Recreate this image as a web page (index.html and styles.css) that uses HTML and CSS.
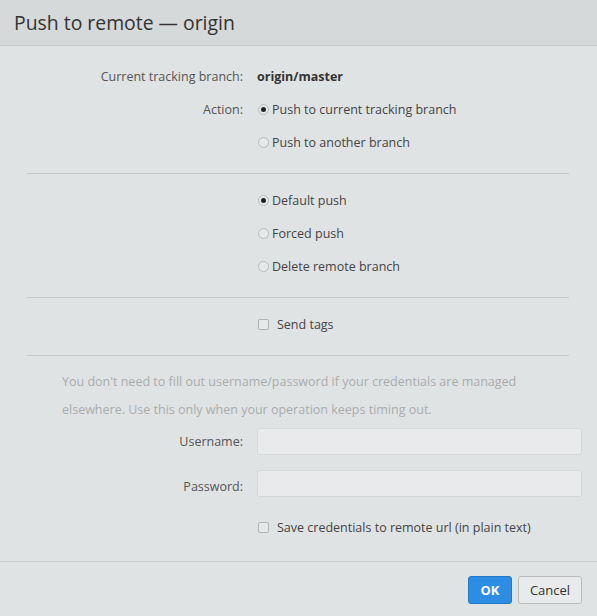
FILE: index.html
```html
<!DOCTYPE html>
<html>
<head>
<meta charset="utf-8">
<link rel="stylesheet" href="styles.css">
</head>
<body>
<div class="dialog">
  <div class="header">Push to remote — origin</div>
  <div class="content">
    <div class="grid">
      <div class="label">Current tracking branch:</div>
      <div class="value bold">origin/master</div>
      <div class="label">Action:</div>
      <div class="value"><span class="radio checked"></span><span class="rtext">Push to current tracking branch</span></div>
      <div class="label"></div>
      <div class="value"><span class="radio"></span><span class="rtext">Push to another branch</span></div>
    </div>
    <div class="sep"></div>
    <div class="grid">
      <div class="label"></div>
      <div class="value"><span class="radio checked"></span><span class="rtext">Default push</span></div>
      <div class="label"></div>
      <div class="value"><span class="radio"></span><span class="rtext">Forced push</span></div>
      <div class="label"></div>
      <div class="value"><span class="radio"></span><span class="rtext">Delete remote branch</span></div>
    </div>
    <div class="sep"></div>
    <div class="grid">
      <div class="label"></div>
      <div class="value"><span class="check"></span><span class="ctext">Send tags</span></div>
    </div>
    <div class="sep"></div>
    <p class="help">You don't need to fill out username/password if your credentials are managed elsewhere. Use this only when your operation keeps timing out.</p>
    <div class="grid creds">
      <div class="label">Username:</div>
      <div class="value"><div class="input"></div></div>
      <div class="label pw">Password:</div>
      <div class="value"><div class="input"></div></div>
      <div class="label"></div>
      <div class="value save"><span class="check"></span><span class="ctext">Save credentials to remote url (in plain text)</span></div>
    </div>
  </div>
  <div class="footer">
    <button class="btn ok">OK</button>
    <button class="btn cancel">Cancel</button>
  </div>
</div>
</body>
</html>
```
FILE: styles.css
```css
html, body {
  margin: 0;
  padding: 0;
}
body {
  font-family: "Open Sans", "Noto Sans", sans-serif;
  font-size: 12.5px;
  color: #555;
  background: #e0e3e4;
}
.dialog {
  width: 597px;
  height: 616px;
  display: flex;
  flex-direction: column;
  background: #e0e3e4;
}
.header {
  height: 46px;
  box-sizing: border-box;
  background: #d6d9da;
  border-bottom: 1px solid #c8cbcc;
  padding-left: 14px;
  font-size: 19.4px;
  line-height: 45px;
  color: #333;
}
.content {
  flex: 1;
  padding-top: 14px;
}
.grid {
  display: grid;
  grid-template-columns: 243px 1fr;
  column-gap: 14px;
  grid-auto-rows: 33px;
  align-items: center;
  padding-right: 15px;
}
.label {
  text-align: right;
  color: #555;
}
.value {
  display: flex;
  align-items: center;
  color: #444;
}
.bold {
  font-weight: 700;
  color: #333;
}
.radio {
  width: 11px;
  height: 11px;
  box-sizing: border-box;
  border: 1px solid #b8bbbc;
  border-radius: 50%;
  background: #e6e8e9;
  margin-left: 1px;
  margin-right: 3px;
  display: flex;
  align-items: center;
  justify-content: center;
}
.radio.checked::after {
  content: "";
  width: 5px;
  height: 5px;
  border-radius: 50%;
  background: #222;
}
.check {
  width: 11px;
  height: 11px;
  box-sizing: border-box;
  border: 1px solid #b0b3b4;
  border-radius: 2px;
  background: #e6e8e9;
  margin-left: 1px;
  margin-right: 8px;
}
.sep {
  height: 1px;
  background: #c6c9ca;
  margin: 14px 28px 10px 27px;
}
.help {
  margin: 12px 0 4px 62px;
  padding-right: 60px;
  line-height: 28px;
  color: #a9acad;
}
.creds {
  grid-auto-rows: auto;
  row-gap: 15px;
}
.pw {
  padding-top: 5px;
}
.input {
  width: 100%;
  height: 27px;
  box-sizing: border-box;
  background: #e8eaeb;
  border: 1px solid #d6d9da;
  border-radius: 2px;
}
.save {
  height: 30px;
}
.footer {
  height: 55px;
  box-sizing: border-box;
  border-top: 1px solid #c8cbcc;
  display: flex;
  justify-content: flex-end;
  align-items: center;
  gap: 6px;
  padding-right: 15px;
  padding-top: 2px;
}
.btn {
  height: 28px;
  box-sizing: border-box;
  font-family: inherit;
  font-size: 13px;
  border-radius: 3px;
  padding: 0;
}
.ok {
  width: 44px;
  background: #2d8de2;
  border: 1px solid #2279c8;
  color: #fff;
  font-weight: 700;
}
.cancel {
  width: 64px;
  background: #e8eaeb;
  border: 1px solid #b9bcbd;
  color: #333;
}
```
